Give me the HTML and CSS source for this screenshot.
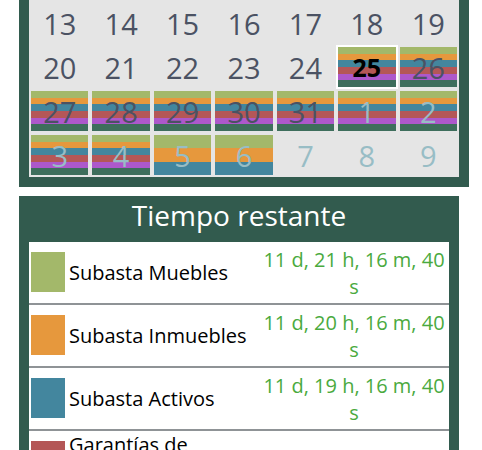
FILE: index.html
```html
<!DOCTYPE html>
<html lang="es">
<head>
    <meta charset="UTF-8">
    <meta name="viewport" content="width=device-width, initial-scale=1.0">
    <title>Calendario de subastas</title>
    <link rel="stylesheet" href="styles.css">
</head>
<body>

    <div class="page">

        <div class="calendar">
            <div class="days">
                <div class="day"><span class="num">13</span></div>
                <div class="day"><span class="num">14</span></div>
                <div class="day"><span class="num">15</span></div>
                <div class="day"><span class="num">16</span></div>
                <div class="day"><span class="num">17</span></div>
                <div class="day"><span class="num">18</span></div>
                <div class="day"><span class="num">19</span></div>

                <div class="day"><span class="num">20</span></div>
                <div class="day"><span class="num">21</span></div>
                <div class="day"><span class="num">22</span></div>
                <div class="day"><span class="num">23</span></div>
                <div class="day"><span class="num">24</span></div>
                <div class="day today">
                    <div class="bars"><i class="muebles"></i><i class="inmuebles"></i><i class="activos"></i><i class="garantias"></i><i class="ventas"></i><i class="otros"></i></div>
                    <span class="num">25</span>
                </div>
                <div class="day">
                    <div class="bars"><i class="muebles"></i><i class="inmuebles"></i><i class="activos"></i><i class="garantias"></i><i class="ventas"></i><i class="otros"></i></div>
                    <span class="num">26</span>
                </div>

                <div class="day">
                    <div class="bars"><i class="muebles"></i><i class="inmuebles"></i><i class="activos"></i><i class="garantias"></i><i class="ventas"></i><i class="otros"></i></div>
                    <span class="num">27</span>
                </div>
                <div class="day">
                    <div class="bars"><i class="muebles"></i><i class="inmuebles"></i><i class="activos"></i><i class="garantias"></i><i class="ventas"></i><i class="otros"></i></div>
                    <span class="num">28</span>
                </div>
                <div class="day">
                    <div class="bars"><i class="muebles"></i><i class="inmuebles"></i><i class="activos"></i><i class="garantias"></i><i class="ventas"></i><i class="otros"></i></div>
                    <span class="num">29</span>
                </div>
                <div class="day">
                    <div class="bars"><i class="muebles"></i><i class="inmuebles"></i><i class="activos"></i><i class="garantias"></i><i class="ventas"></i><i class="otros"></i></div>
                    <span class="num">30</span>
                </div>
                <div class="day">
                    <div class="bars"><i class="muebles"></i><i class="inmuebles"></i><i class="activos"></i><i class="garantias"></i><i class="ventas"></i><i class="otros"></i></div>
                    <span class="num">31</span>
                </div>
                <div class="day next">
                    <div class="bars"><i class="muebles"></i><i class="inmuebles"></i><i class="activos"></i><i class="garantias"></i><i class="ventas"></i><i class="otros"></i></div>
                    <span class="num">1</span>
                </div>
                <div class="day next">
                    <div class="bars"><i class="muebles"></i><i class="inmuebles"></i><i class="activos"></i><i class="garantias"></i><i class="ventas"></i><i class="otros"></i></div>
                    <span class="num">2</span>
                </div>

                <div class="day next">
                    <div class="bars"><i class="muebles"></i><i class="inmuebles"></i><i class="activos"></i><i class="garantias"></i><i class="ventas"></i><i class="otros"></i></div>
                    <span class="num">3</span>
                </div>
                <div class="day next">
                    <div class="bars"><i class="muebles"></i><i class="inmuebles"></i><i class="activos"></i><i class="garantias"></i><i class="ventas"></i><i class="otros"></i></div>
                    <span class="num">4</span>
                </div>
                <div class="day next">
                    <div class="bars"><i class="muebles"></i><i class="inmuebles"></i><i class="activos"></i></div>
                    <span class="num">5</span>
                </div>
                <div class="day next">
                    <div class="bars"><i class="muebles"></i><i class="inmuebles"></i><i class="activos"></i></div>
                    <span class="num">6</span>
                </div>
                <div class="day next"><span class="num">7</span></div>
                <div class="day next"><span class="num">8</span></div>
                <div class="day next"><span class="num">9</span></div>
            </div>
        </div>

        <div class="remaining">
            <h2 class="remaining-title">Tiempo restante</h2>
            <div class="remaining-list">
                <div class="remaining-row">
                    <span class="swatch muebles"></span>
                    <span class="label">Subasta Muebles</span>
                    <span class="time">11 d, 21 h, 16 m, 40 s</span>
                </div>
                <div class="remaining-row">
                    <span class="swatch inmuebles"></span>
                    <span class="label">Subasta Inmuebles</span>
                    <span class="time">11 d, 20 h, 16 m, 40 s</span>
                </div>
                <div class="remaining-row">
                    <span class="swatch activos"></span>
                    <span class="label">Subasta Activos</span>
                    <span class="time">11 d, 19 h, 16 m, 40 s</span>
                </div>
                <div class="remaining-row">
                    <span class="swatch garantias"></span>
                    <span class="label">Garantías de Subastas de Inmuebles</span>
                    <span class="time">11 d, 18 h, 16 m, 40 s</span>
                </div>
                <div class="remaining-row">
                    <span class="swatch ventas"></span>
                    <span class="label">Venta Directa</span>
                    <span class="time">11 d, 17 h, 16 m, 40 s</span>
                </div>
                <div class="remaining-row">
                    <span class="swatch otros"></span>
                    <span class="label">Otros Remates</span>
                    <span class="time">11 d, 16 h, 16 m, 40 s</span>
                </div>
            </div>
        </div>

    </div>

</body>
</html>
```

FILE: styles.css
```css
body {
    margin: 0;
    font-family: "Open Sans", "Noto Sans", sans-serif;
    background-color: #ffffff;
}

.page {
    padding: 0 19px;
}

/* Event colours, shared by the calendar bars and the legend */
.muebles { background-color: #a3b86a; }
.inmuebles { background-color: #e6983d; }
.activos { background-color: #43869e; }
.garantias { background-color: #b45757; }
.ventas { background-color: #ad58cb; }
.otros { background-color: #3e6e5c; }

/* Calendar */
.calendar {
    width: 430px;
    border: 10px solid #325b4e;
    border-top: 0;
}

.days {
    display: grid;
    grid-template-columns: repeat(7, 1fr);
    padding-top: 1px;
    background-color: #e5e5e5;
}

.day {
    position: relative;
    height: 40px;
    margin: 2px;
}

.bars {
    display: flex;
    flex-direction: column;
    height: 100%;
}

.bars i {
    flex: 1;
}

.num {
    position: absolute; /* number sits on top of the coloured bars */
    top: 0;
    left: 0;
    right: 0;
    bottom: 0;
    display: flex;
    align-items: center;
    justify-content: center;
    font-size: 29px;
    color: #4b5263;
}

.day.next .num {
    color: #98bdc5;
}

.day.today {
    outline: 2px solid #ffffff;
}

.day.today .num {
    font-size: 25px;
    font-weight: bold;
    color: #000000;
}

/* Time remaining */
.remaining {
    width: 420px;
    margin-top: 9px;
    padding: 0 10px;
    background-color: #325b4e;
}

.remaining-title {
    margin: 0;
    padding-bottom: 8px;
    font-size: 28px;
    font-weight: normal;
    text-align: center;
    color: #ffffff;
}

.remaining-list {
    background-color: #ffffff;
}

.remaining-row {
    display: grid;
    grid-template-columns: 34px 1fr 186px;
    column-gap: 4px;
    align-items: center;
    min-height: 61px;
    padding: 0 2px;
    border-bottom: 2px solid #8f9396;
    font-size: 20px;
}

.swatch {
    align-self: start;
    height: 40px;
    margin-top: 10px;
}

.label {
    color: #000000;
}

.time {
    text-align: center;
    color: #4aaa3e;
}
```
